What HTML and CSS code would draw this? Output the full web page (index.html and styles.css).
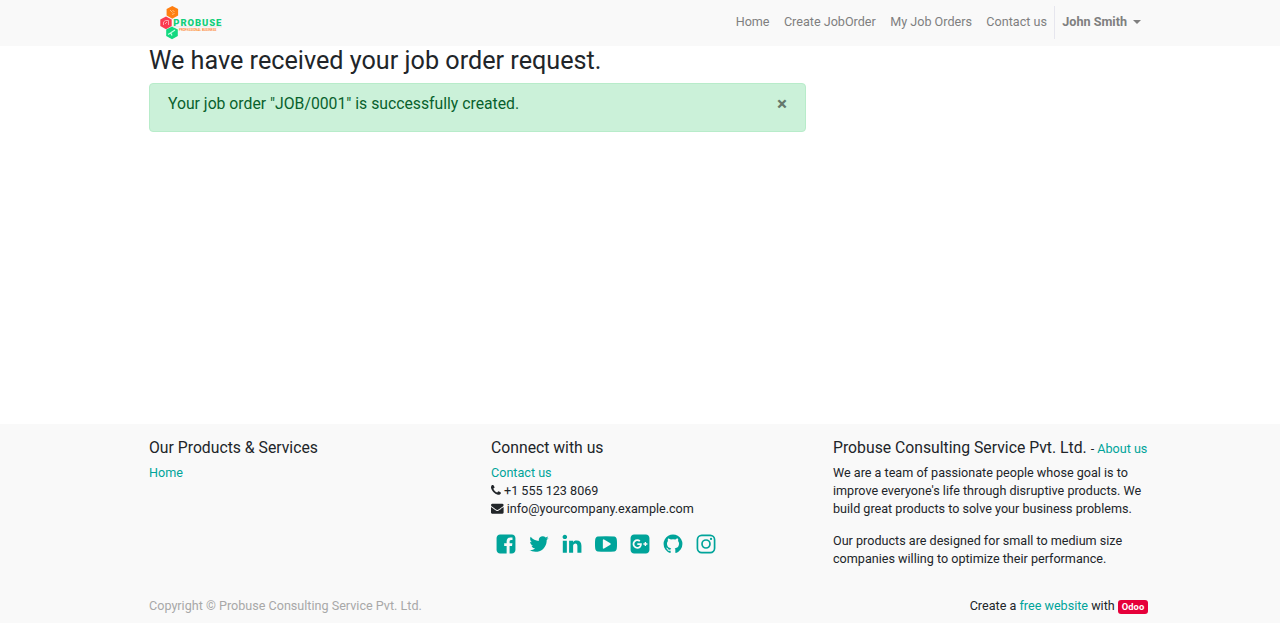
FILE: index.html
```html
<!DOCTYPE html>
<html lang="en">
<head>
<meta charset="utf-8">
<title>Job Order</title>
<link rel="stylesheet" href="styles.css">
</head>
<body>
<header class="header">
  <div class="container navbar">
    <a class="brand" href="#">
      <svg class="logo" width="64" height="34" viewBox="0 0 64 34">
        <path fill="#ff7f11" d="M12.300 0l5.800 3v6.500l-5.800 3.300-5.700-3.300V3z"/>
        <path fill="#fb3b50" d="M6 10.500l5.700 3v6.500L6 23.200.3 20v-6.500z"/>
        <path fill="#12d980" d="M12 20.500l5.800 3V30L12 33.200 6.200 30v-6.500z"/>
        <path fill="none" stroke="#ffc489" stroke-width=".9" d="M10 4l2.500 2.500M12 8.500l2.500-1M12.500 4.500l2 1"/>
        <path fill="none" stroke="#ffb0b8" stroke-width=".9" d="M3.500 19v-3l2-1.500h3V19M5 18l2-2"/>
        <path fill="none" stroke="#c5ffe3" stroke-width="1.300" d="M8 28.500l2.500-1.500 4.500-3M10.500 26.500l1.500 3"/>
        <path stroke="#e8e8e8" stroke-width="1" d="M13 20.800h49"/>
        <text class="logo-name" x="13.300" y="19.500" textLength="48">PROBUSE</text>
        <text class="logo-sub" x="19" y="25" textLength="37.500" lengthAdjust="spacingAndGlyphs">PROFESSIONAL BUSINESS</text>
      </svg>
    </a>
    <nav class="nav">
      <a href="#">Home</a>
      <a href="#">Create JobOrder</a>
      <a href="#">My Job Orders</a>
      <a href="#">Contact us</a>
      <a class="user" href="#"><b>John Smith</b><span class="caret"></span></a>
    </nav>
  </div>
</header>
<main class="container main">
  <h2 class="title">We have received your job order request.</h2>
  <div class="alert">
    <span>Your job order "JOB/0001" is successfully created.</span>
    <button class="close" type="button" aria-label="Close">×</button>
  </div>
</main>
<footer class="footer">
  <div class="container columns">
    <section>
      <h5 class="heading">Our Products &amp; Services</h5>
      <a href="#">Home</a>
    </section>
    <section>
      <h5 class="heading">Connect with us</h5>
      <div><a href="#">Contact us</a></div>
      <div><svg class="fa phone" viewBox="192 0 1408 1792"><path d="M1600 1240q0 27-10 70.500t-21 68.500q-21 50-122 106-94 51-186 51-27 0-53-3.500t-57.500-12.500-47-14.500-55.500-20.500-49-18q-98-35-175-83-127-79-264-216t-216-264q-48-77-83-175-3-9-18-49t-20.500-55.500-14.500-47-12.500-57.500-3.500-53q0-92 51-186 56-101 106-122 25-11 68.500-21t70.500-10q14 0 21 3 18 6 53 76 11 19 30 54t35 63.500 31 53.500q3 4 17.500 25t21.500 35.500 7 28.500q0 20-28.500 50t-62 55-62 53-28.500 46q0 9 5 22.500t8.500 20.500 14 24 11.500 19q76 137 174 235t235 174q2 1 19 11.500t24 14 20.500 8.500 22.500 5q18 0 46-28.500t53-62 55-62 50-28.500q14 0 28.500 7t35.500 21.500 25 17.500q25 15 53.500 31t63.500 35 54 30q70 35 76 53 3 7 3 21z"/></svg> +1 555 123 8069</div>
      <div><svg class="fa mail" viewBox="0 0 1792 1792"><path d="M1792 710v794q0 66-47 113t-113 47h-1472q-66 0-113-47t-47-113v-794q44 49 101 87 362 246 497 345 57 42 92.500 65.500t94.500 48 110 24.500h2q51 0 110-24.500t94.500-48 92.500-65.500q170-123 498-345 57-39 100-87zm0-294q0 79-49 151t-122 123q-376 261-468 325-10 7-42.500 31t-54 38.500-52 32.500-57.500 27-50 9h-2q-23 0-50-9t-57.500-27-52-32.500-54-38.500-42.500-31q-91-64-262-182.500t-205-142.500q-62-42-117-115.500t-55-136.500q0-78 41.500-130t118.500-52h1472q65 0 112.500 47t47.500 113z"/></svg> info@yourcompany.example.com</div>
      <div class="social">
        <a href="#"><svg viewBox="0 0 1792 1792"><path d="M1376 128q119 0 203.500 84.500t84.500 203.500v960q0 119-84.500 203.500t-203.500 84.500h-188v-595h199l30-232h-229v-148q0-56 23.500-84t91.500-28l122-1v-207q-63-9-178-9-136 0-217.500 80t-81.500 226v171h-200v232h200v595h-532q-119 0-203.500-84.500t-84.500-203.500v-960q0-119 84.500-203.500t203.500-84.500h960z"/></svg></a>
        <a href="#"><svg viewBox="0 0 1792 1792"><path d="M1684 408q-67 98-162 167 1 14 1 42 0 130-38 259.500t-115.500 248.500-184.500 210.500-258 146-323 54.500q-271 0-496-145 35 4 78 4 225 0 401-138-105-2-188-64.500t-114-159.500q33 5 61 5 43 0 85-11-112-23-185.500-111.500t-73.500-205.500v-4q68 38 146 41-66-44-105-115t-39-154q0-88 44-163 121 149 294.500 238.500t371.500 99.500q-8-38-8-74 0-134 94.500-228.500t228.500-94.500q140 0 236 102 109-21 205-78-37 115-142 178 93-10 186-50z"/></svg></a>
        <a href="#"><svg viewBox="0 0 1792 1792"><path d="M477 625v991h-330v-991h330zm21-306q1 73-50.500 122t-135.500 49h-2q-82 0-132-49t-50-122q0-74 51.500-122.500t134.500-48.500 133 48.500 51 122.500zm1166 729v568h-329v-530q0-105-40.500-164.500t-126.500-59.500q-63 0-105.500 34.500t-63.500 85.500q-11 30-11 81v553h-329q2-399 2-647t-1-296l-1-48h329v144h-2q20-32 41-56t56.500-52 87-43.500 114.500-15.500q171 0 275 113.500t104 332.500z"/></svg></a>
        <a class="wide" href="#"><svg viewBox="0 0 1792 1792"><path d="M1280 896q0-37-30-54l-512-320q-31-20-65-2-33 18-33 56v640q0 38 33 56 16 8 31 8 20 0 34-10l512-320q30-17 30-54zm512 0q0 96-1 150t-8.500 136.500-22.500 147.500q-16 73-69 123t-124 58q-222 25-671 25t-671-25q-71-8-124.500-58t-69.500-123q-14-65-21.500-147.500t-8.500-136.500-1-150 1-150 8.500-136.500 22.500-147.500q16-73 69-123t124-58q222-25 671-25t671 25q71 8 124.500 58t69.500 123q14 65 21.500 147.500t8.500 136.500 1 150z"/></svg></a>
        <a href="#"><svg viewBox="0 0 1792 1792"><path d="M1045 905q0-26-6-64h-362v132h217q-3 24-16.500 50t-37.500 53-66.500 44.500-96.500 17.500q-99 0-169-71t-70-171 70-171 169-71q92 0 153 59l104-101q-108-100-257-100-160 0-272 112.500t-112 271.500 112 271.500 272 112.500q165 0 266.500-105t101.500-270zm345 46h109v-110h-109v-110h-110v110h-110v110h110v110h110v-110zm274-535v960q0 119-84.500 203.500t-203.500 84.500h-960q-119 0-203.500-84.500t-84.500-203.500v-960q0-119 84.500-203.500t203.500-84.500h960q119 0 203.500 84.500t84.500 203.500z"/></svg></a>
        <a href="#"><svg viewBox="0 0 1792 1792"><path d="M896 128q209 0 385.500 103t279.500 279.500 103 385.500q0 251-146.500 451.500t-378.500 277.500q-27 5-40-7t-13-30q0-3 .5-76.500t.5-134.500q0-97-52-142 57-6 102.500-18t94-39 81-66.500 53-105 20.500-150.500q0-119-79-206 37-91-8-204-28-9-81 11t-92 44l-38 24q-93-26-192-26t-192 26q-16-11-42.500-27t-83.500-38.500-85-13.500q-45 113-8 204-79 87-79 206 0 85 20.500 150t52.500 105 80.500 67 94 39 102.500 18q-39 36-49 103-21 10-45 15t-57 5-65.500-21.500-55.500-62.500q-19-32-48.500-52t-49.500-24l-20-3q-21 0-29 4.500t-5 11.500 9 14 13 12l7 5q22 10 43.500 38t31.500 51l10 23q13 38 44 61.500t67 30 69.500 7 55.500-3.500l23-4q0 38 .5 88.500t.5 54.500q0 18-13 30t-40 7q-232-77-378.500-277.500t-146.500-451.500q0-209 103-385.500t279.500-279.500 385.500-103z"/></svg></a>
        <a href="#"><svg viewBox="0 0 1792 1792"><rect class="line" x="197" y="197" width="1398" height="1398" rx="350"/><circle class="line" cx="896" cy="896" r="325"/><circle cx="1306" cy="486" r="92"/></svg></a>
      </div>
    </section>
    <section>
      <h5 class="heading about">Probuse Consulting Service Pvt. Ltd. <small>- <a href="#">About us</a></small></h5>
      <p>We are a team of passionate people whose goal is to improve everyone's life through disruptive products. We build great products to solve your business problems.</p>
      <p>Our products are designed for small to medium size companies willing to optimize their performance.</p>
    </section>
  </div>
  <div class="container bottom">
    <span class="copyright">Copyright © Probuse Consulting Service Pvt. Ltd.</span>
    <span>Create a <a href="#">free website</a> with <b class="badge">Odoo</b></span>
  </div>
</footer>
</body>
</html>
```
FILE: styles.css
```css
* { box-sizing: border-box; }
body {
  margin: 0;
  min-height: 623px;
  display: flex;
  flex-direction: column;
  font: 400 12.6px/18px Roboto, sans-serif;
  color: #212529;
  background: #fff;
}
a { color: #00a49a; text-decoration: none; }
p { margin: 0 0 14px; }
.container { width: 999.200px; margin: 0 auto 0 149px; }
.header { height: 46px; background: #f9f9f9; }
.navbar { height: 45px; display: flex; justify-content: space-between; align-items: center; }
.brand { margin-left: 11px; height: 34px; }
.logo { display: block; overflow: visible; }
.logo-name { font: 900 9.500px Roboto, sans-serif; fill: #12cf7a; }
.logo-sub { font: 500 4.200px Roboto, sans-serif; fill: #ff7a10; }
.nav { display: flex; align-items: center; margin-bottom: 1px; }
.nav a { padding: 7px 7.200px 8px; color: #7f7f7f; }
.nav .user { display: flex; align-items: center; border-left: 1px solid #e6e6ee; }
.caret { margin-left: 6px; border: 4px solid transparent; border-top-color: currentColor; border-bottom: 0; }
.main { flex: 1; }
.title { margin: 0 0 7px; font-size: 25.200px; line-height: 30px; font-weight: 400; }
.alert {
  width: 657px;
  height: 49px;
  padding: 10px 18px;
  display: flex;
  justify-content: space-between;
  border: 1px solid #b8ecca;
  border-radius: 4px;
  background: #cbf1d9;
  color: #08612d;
  font-size: 15.750px;
  line-height: 20px;
}
.close { padding: 0; border: 0; background: none; font: 700 18.900px/20px Roboto, sans-serif; color: #65786c; align-self: flex-start; }
.footer { height: 199px; padding-top: 14px; background: #f9f9f9; display: flex; flex-direction: column; }
.columns { flex: 1; display: grid; grid-template-columns: 342px 342px 1fr; }
.heading { margin: 0 0 7px; font-size: 15.750px; line-height: 19px; font-weight: 400; white-space: nowrap; }
.about { height: 19px; }
.heading small { font-size: 12.600px; }
.fa { height: 12.600px; vertical-align: -1.500px; fill: currentColor; }
.phone { width: 9.900px; }
.mail { width: 12.600px; }
.social { display: flex; margin: 15px 0 0 -1.200px; }
.social a { width: 32.900px; display: flex; justify-content: center; }
.social .wide { width: 35px; }
.social svg { width: 22px; height: 22px; fill: currentColor; }
.social .line { fill: none; stroke: currentColor; stroke-width: 138px; }
.bottom { display: flex; justify-content: space-between; padding-bottom: 8px; }
.copyright { color: #a8a8a8; }
.badge { display: inline-block; padding: 0 4px; border-radius: 3px; background: #e6003a; color: #fff; font-size: 9.400px; line-height: 14px; }
```
